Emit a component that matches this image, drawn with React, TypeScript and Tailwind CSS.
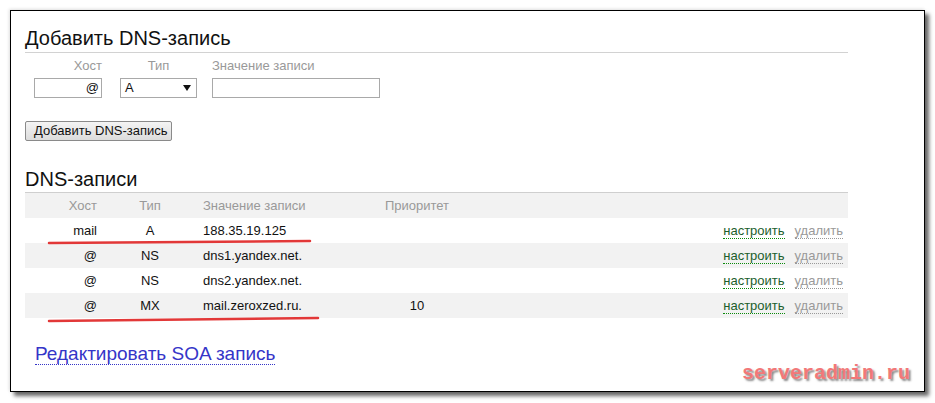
type DnsRow = {
  host: string
  type: string
  value: string
  priority: string
}

const rows: DnsRow[] = [
  { host: 'mail', type: 'A', value: '188.35.19.125', priority: '' },
  { host: '@', type: 'NS', value: 'dns1.yandex.net.', priority: '' },
  { host: '@', type: 'NS', value: 'dns2.yandex.net.', priority: '' },
  { host: '@', type: 'MX', value: 'mail.zeroxzed.ru.', priority: '10' },
]

export default function App() {
  return (
    <div className="w-[935px] h-[403px] bg-white pt-[10px] pl-[10px] font-['Liberation_Sans',Arial,sans-serif] text-[#111]">
      <div className="relative w-[915px] h-[382px] border border-black bg-white shadow-[4px_4px_4px_rgba(0,0,0,0.6),-1px_-1px_3px_rgba(0,0,0,0.12)] pt-[15px] pl-[14px]">
        <div className="w-[823px]">
          {/* Добавить запись */}
          <h2 className="text-[20px] leading-[24px] pb-[2px] border-b border-[#d2d2d2]">Добавить DNS-запись</h2>

          <div className="flex mt-[5px] pl-[9px] text-[13px] leading-[16px] text-[#999]">
            <div className="w-[68px] text-right">Хост</div>
            <div className="w-[77px] ml-[18px] text-center">Тип</div>
            <div className="w-[168px] ml-[15px]">Значение записи</div>
          </div>

          <div className="flex mt-[4px] pl-[9px] text-[13px]">
            <div className="w-[68px] h-[20px] border border-[#a9a9a9] text-right pr-[2px] leading-[18px]">@</div>
            <div className="w-[77px] h-[20px] ml-[18px] border border-[#a9a9a9] flex items-center justify-between pl-[4px] pr-[5px] leading-[18px]">
              <span>A</span>
              <svg width="8" height="6" viewBox="0 0 8 6"><path d="M0 0h8L4 6z" fill="#111" /></svg>
            </div>
            <div className="w-[168px] h-[20px] ml-[15px] border border-[#a9a9a9]" />
          </div>

          <button className="mt-[23px] w-[147px] h-[20px] border border-[#8a8a8a] rounded-[2px] bg-gradient-to-b from-[#f4f4f4] to-[#dcdcdc] text-[13px] leading-[18px] text-left pl-[8px] text-[#111]">
            Добавить DNS-запись
          </button>

          {/* Список записей */}
          <h2 className="mt-[25px] text-[20px] leading-[24px] pb-[1px]">DNS-записи</h2>

          <div className="border-t border-[#cfcfcf] text-[13px]">
            <div className="flex items-center h-[25px] bg-[#f2f2f2] text-[#999]">
              <div className="w-[72px] text-right">Хост</div>
              <div className="w-[106px] text-center">Тип</div>
              <div className="w-[167px]">Значение записи</div>
              <div className="w-[94px] text-center">Приоритет</div>
            </div>
            {rows.map((r, i) => (
              <div key={i} className={`flex items-center h-[25px] ${i % 2 === 1 ? 'bg-[#f2f2f2]' : 'bg-white'}`}>
                <div className="w-[72px] text-right">{r.host}</div>
                <div className="w-[106px] text-center">{r.type}</div>
                <div className="w-[167px]">{r.value}</div>
                <div className="w-[94px] text-center">{r.priority}</div>
                <div className="flex-1 flex justify-end gap-[10px] pr-[5px]">
                  <span className="leading-[15px] text-[#1c5e2c] border-b border-dotted border-[#0a8a0a]">настроить</span>
                  <span className="leading-[15px] text-[#999] border-b border-dotted border-[#999]">удалить</span>
                </div>
              </div>
            ))}
          </div>

          <div className="mt-[25px] pl-[10px]">
            <span className="inline-block text-[19px] leading-[20px] text-[#3535c8] border-b border-dotted border-[#3535c8]">
              Редактировать SOA запись
            </span>
          </div>
        </div>

        {/* пометки красным */}
        <svg className="absolute left-0 top-0 pointer-events-none" width="915" height="382">
          <path d="M38 232 Q 170 231 299 230" stroke="#e23838" strokeWidth="2.5" fill="none" strokeLinecap="round" />
          <path d="M38 310 Q 180 309 307 307" stroke="#e23838" strokeWidth="2.5" fill="none" strokeLinecap="round" />
        </svg>

        <div className="absolute left-[731px] top-[352px] font-['Liberation_Mono',monospace] font-bold text-[20px] leading-[22px] text-[#f27878] [text-shadow:2px_2px_2px_rgba(60,60,60,0.6)]">
          serveradmin.ru
        </div>
      </div>
    </div>
  )
}
